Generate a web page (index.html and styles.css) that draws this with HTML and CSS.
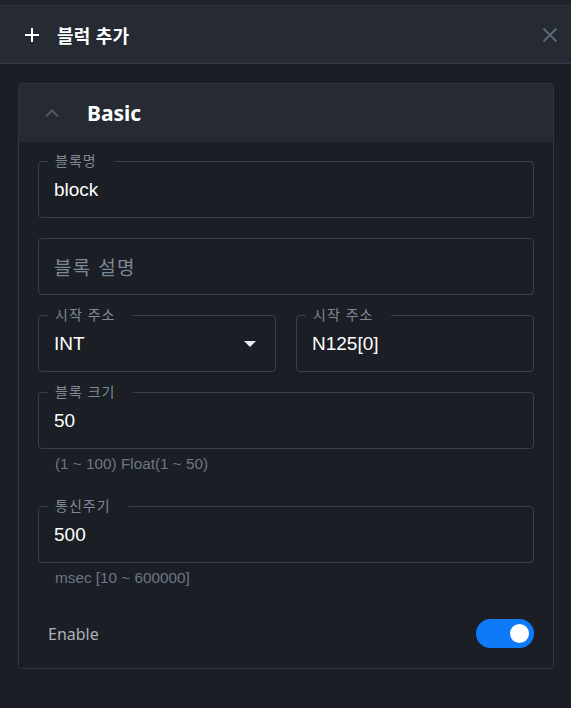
FILE: index.html
```html
<!DOCTYPE html>
<html lang="ko">
<head>
<meta charset="utf-8">
<title>블럭 추가</title>
<link rel="stylesheet" href="styles.css">
</head>
<body>
<div class="topbar"></div>
<header class="dialog-header">
  <svg class="plus-icon" width="16" height="16" viewBox="0 0 16 16"><path d="M8 1v14M1 8h14" stroke="#ffffff" stroke-width="2" fill="none"/></svg>
  <h1 class="dialog-title">블럭 추가</h1>
  <button class="close-btn" aria-label="close">
    <svg width="16" height="16" viewBox="0 0 16 16"><path d="M1.5 1.5l13 13M14.5 1.5l-13 13" stroke="#5d6778" stroke-width="2" fill="none"/></svg>
  </button>
</header>
<main class="content">
  <section class="card">
    <div class="card-header">
      <svg class="chevron" width="24" height="24" viewBox="0 0 24 24"><path d="M6 15.5l6-6 6 6" stroke="#4f5664" stroke-width="2" fill="none"/></svg>
      <h2 class="card-title">Basic</h2>
    </div>
    <div class="card-body">
      <div class="field">
        <span class="field-label">블록명</span>
        <span class="field-value">block</span>
      </div>
      <div class="field gap-20">
        <span class="field-placeholder">블록 설명</span>
      </div>
      <div class="field-row gap-20">
        <div class="field">
          <span class="field-label">시작 주소</span>
          <span class="field-value">INT</span>
          <svg class="caret" width="12" height="6" viewBox="0 0 12 6"><path d="M0 0h12L6 6z" fill="#e9ebee"/></svg>
        </div>
        <div class="field">
          <span class="field-label">시작 주소</span>
          <span class="field-value">N125[0]</span>
        </div>
      </div>
      <div class="field gap-20">
        <span class="field-label">블록 크기</span>
        <span class="field-value">50</span>
      </div>
      <p class="helper">(1 ~ 100) Float(1 ~ 50)</p>
      <div class="field gap-32">
        <span class="field-label">통신주기</span>
        <span class="field-value">500</span>
      </div>
      <p class="helper">msec [10 ~ 600000]</p>
      <div class="switch-row">
        <span class="switch-label">Enable</span>
        <span class="switch"><span class="knob"></span></span>
      </div>
    </div>
  </section>
</main>
</body>
</html>
```
FILE: styles.css
```css
* { box-sizing: border-box; }
html, body {
  margin: 0;
  padding: 0;
  background: #1b1e24;
  height: 100%;
}
body {
  font-family: "Noto Sans", "Noto Sans CJK KR", sans-serif;
  color: #ffffff;
}
.topbar {
  height: 6px;
  background: #1f232a;
  border-bottom: 1px solid #2d323b;
}
.dialog-header {
  height: 58px;
  background: #252a33;
  border-bottom: 1px solid #363b45;
  display: flex;
  align-items: center;
  padding: 0 13px 0 24px;
}
.plus-icon { flex: none; }
.dialog-title {
  margin: 0 0 0 17px;
  font-family: "Noto Sans CJK KR", sans-serif;
  font-weight: 700;
  font-size: 18px;
  letter-spacing: 0.2px;
  line-height: 1;
  flex: 1;
}
.close-btn {
  background: none;
  border: 0;
  padding: 0;
  width: 16px;
  height: 16px;
  display: flex;
}
.content {
  padding: 19px 17px 0 18px;
}
.card {
  border: 1px solid #30353f;
  border-radius: 4px;
  overflow: hidden;
}
.card-header {
  height: 58px;
  background: #252a33;
  display: flex;
  align-items: center;
  padding-left: 21px;
}
.chevron { flex: none; }
.card-title {
  margin: 0 0 0 23px;
  font-family: "Noto Sans", sans-serif;
  font-weight: 700;
  font-size: 21px;
  line-height: 1;
}
.card-body {
  padding: 19px 19px 20px 19px;
  background: #1b1e24;
}
.gap-20 { margin-top: 20px; }
.gap-32 { margin-top: 32px; }
.field {
  position: relative;
  height: 57px;
  border: 1px solid #3a3f4a;
  border-radius: 4px;
  display: flex;
  align-items: center;
  padding: 0 18px 0 15px;
}
.field-row {
  display: flex;
  gap: 20px;
}
.field-row .field { flex: 1; }
.field-label {
  position: absolute;
  top: -10px;
  left: 9px;
  padding: 0 18px 0 7px;
  background: #1b1e24;
  font-family: "Noto Sans CJK KR", sans-serif;
  font-size: 14px;
  letter-spacing: 1px;
  line-height: 16px;
  color: #7f8a98;
}
.field-value {
  font-family: "Liberation Sans", "Noto Sans CJK KR", sans-serif;
  font-size: 19px;
  color: #ffffff;
  flex: 1;
}
.field-placeholder {
  font-family: "Noto Sans CJK KR", sans-serif;
  font-size: 19px;
  letter-spacing: 1.3px;
  color: #7b8898;
}
.caret { flex: none; margin-right: 1px; }
.helper {
  margin: 5px 0 0 17px;
  font-family: "Liberation Sans", sans-serif;
  font-size: 15.3px;
  line-height: 20px;
  color: #6b7787;
}
.switch-row {
  margin-top: 31px;
  display: flex;
  align-items: center;
  justify-content: space-between;
  padding-left: 10px;
}
.switch-label {
  font-family: "Noto Sans", sans-serif;
  font-size: 16px;
  color: #acb1b9;
}
.switch {
  width: 58px;
  height: 29px;
  border-radius: 15px;
  background: #0d7bf8;
  display: flex;
  align-items: center;
  justify-content: flex-end;
  padding: 0 5px;
}
.knob {
  width: 19px;
  height: 19px;
  border-radius: 50%;
  background: #ffffff;
}
```
